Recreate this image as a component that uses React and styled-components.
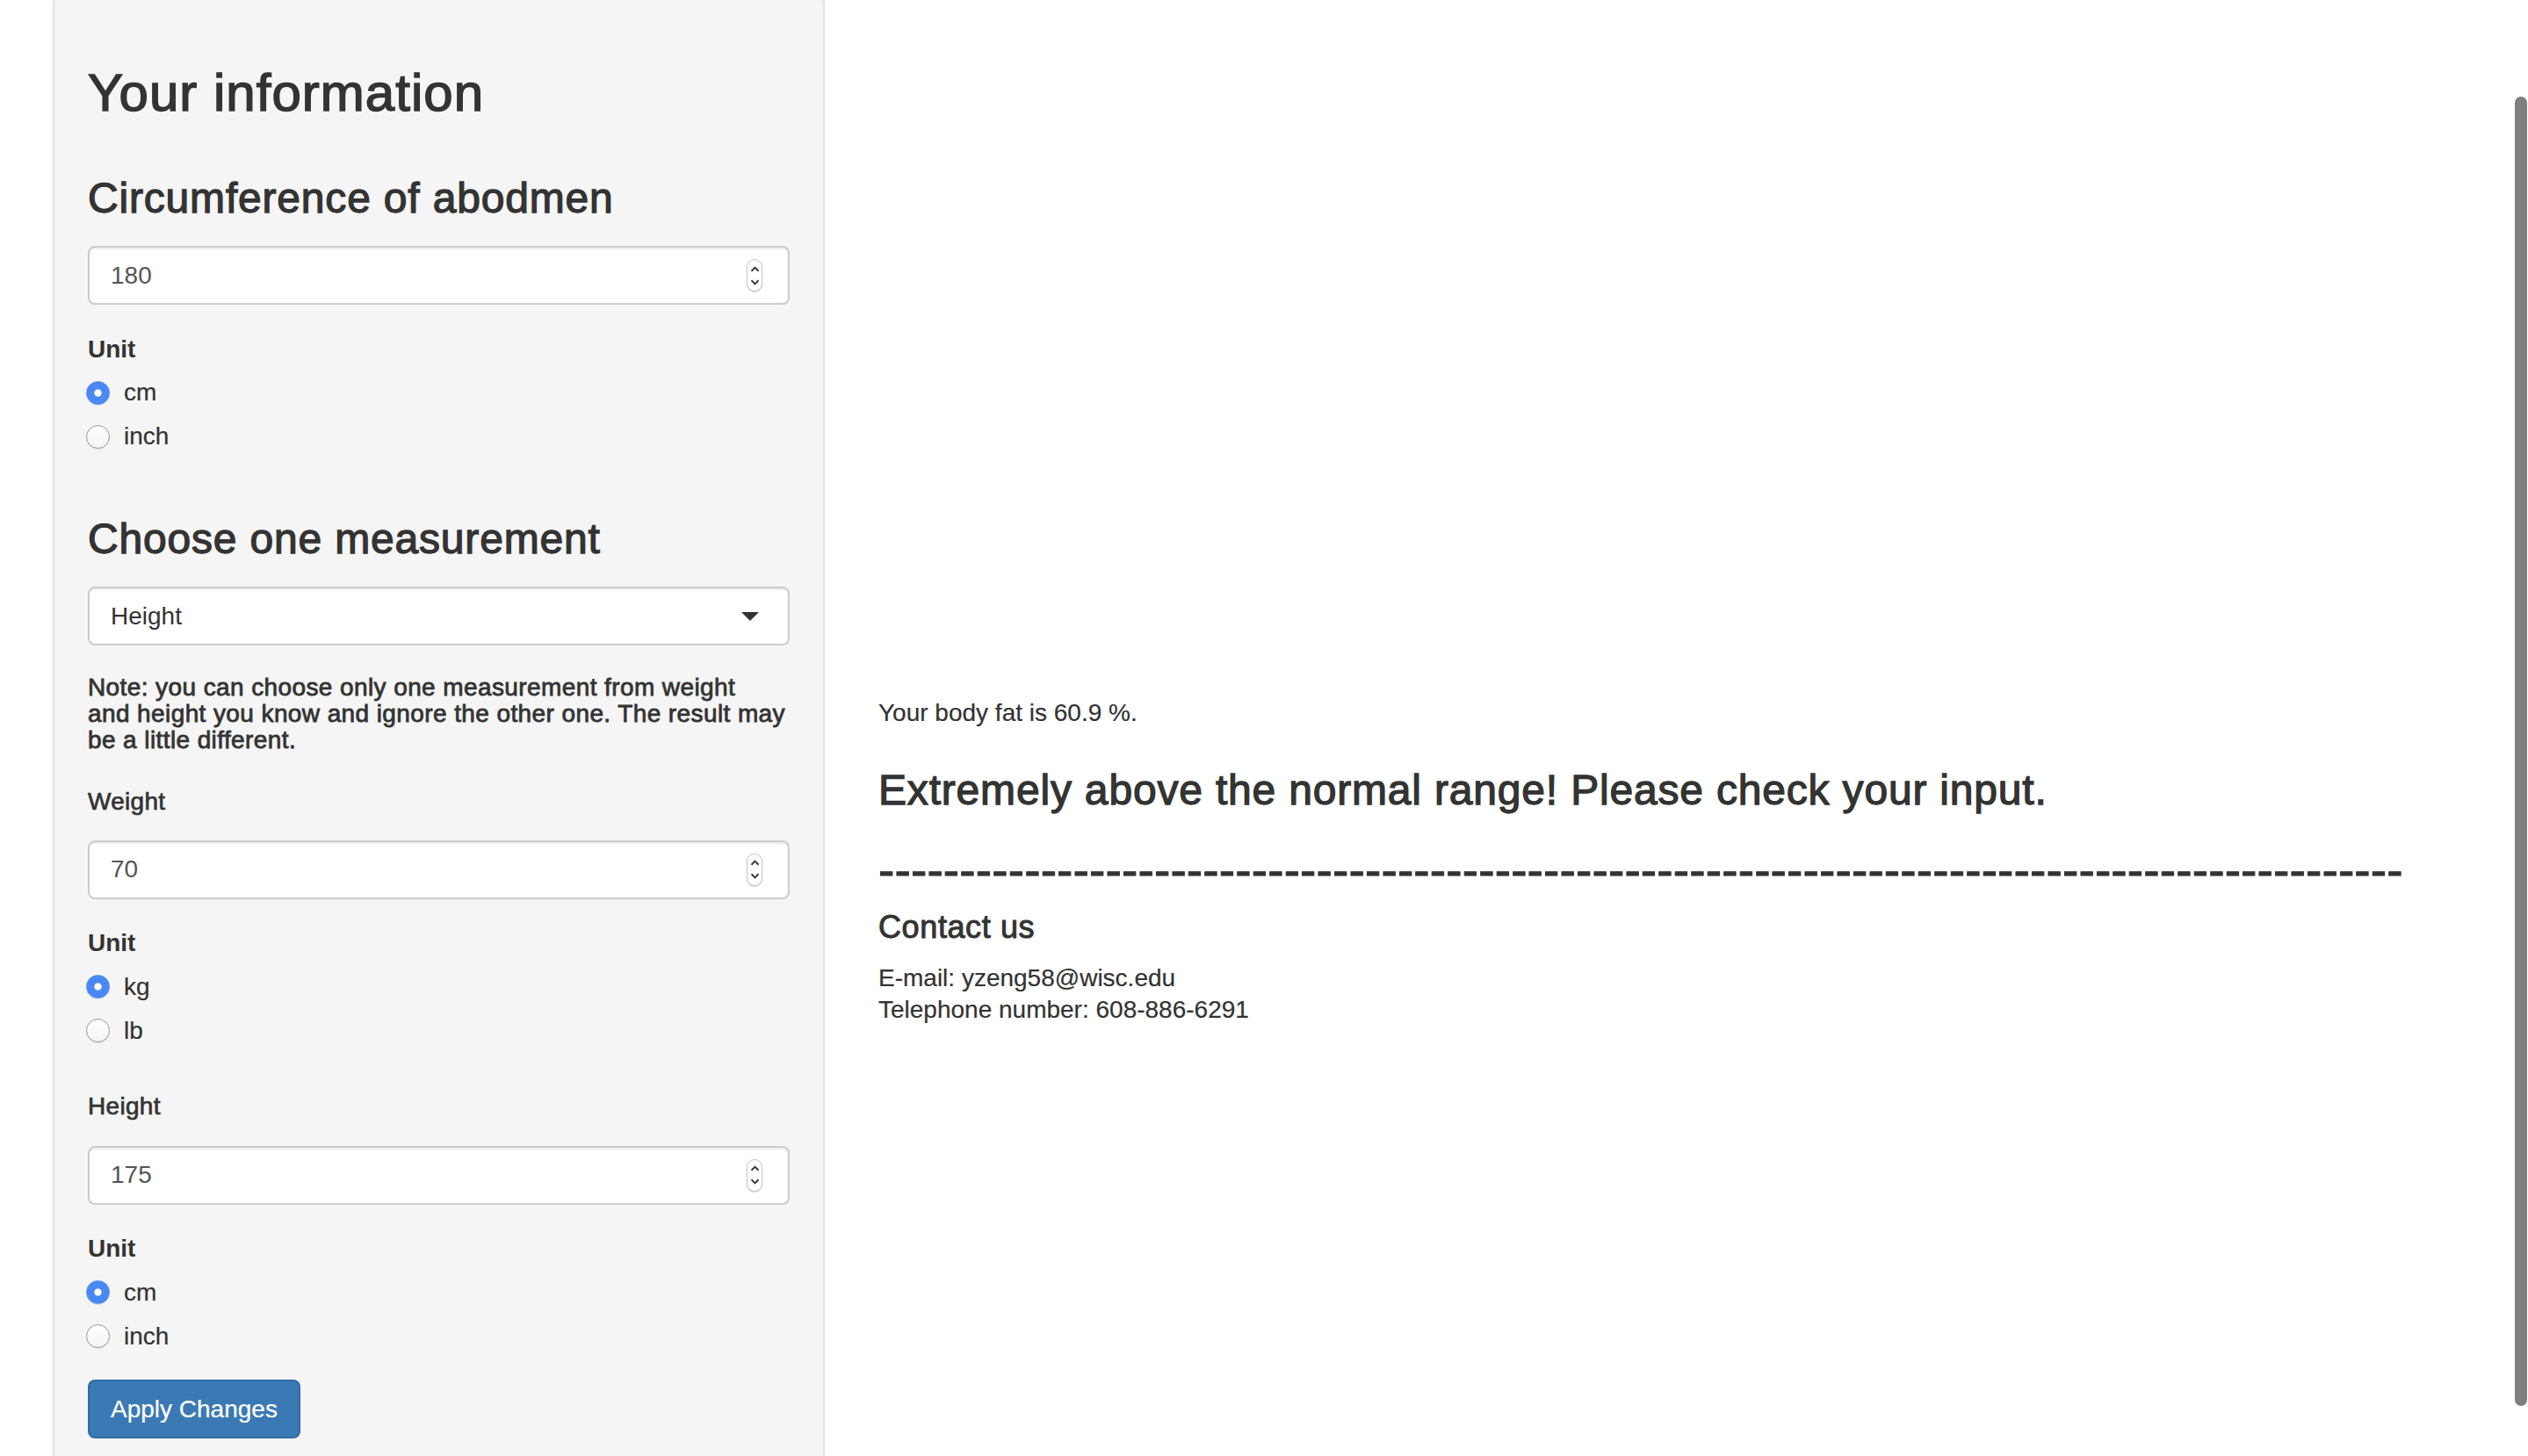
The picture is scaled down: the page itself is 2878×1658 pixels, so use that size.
import React from 'react'
import styled, { createGlobalStyle, css } from 'styled-components'


const GlobalStyle = createGlobalStyle`
    html, body {
        margin: 0;
        padding: 0;
        overflow: hidden;
        background: #fff;
    }
    body {
        font-family: "Liberation Sans", Arial, Helvetica, sans-serif;
        color: #333;
    }
    * {
        box-sizing: border-box;
    }
`;

// Helvetica Neue Medium look on top of Liberation Sans
const medium = css`
    font-weight: 400;
    -webkit-text-stroke: ${p => p.$stroke || '0.7px'} currentColor;
    letter-spacing: 0.017em;
`;

const Page = styled.div`
    display: grid;
    grid-template-columns: 879px 1fr;
    column-gap: 61px;
    align-items: start;
    padding: 0 30px 0 60px;
    min-height: 1658px;
`;

const Well = styled.form`
    display: flex;
    flex-direction: column;
    margin-top: -5px;
    padding: 38px 38px 38px;
    background: #f5f5f5;
    border: 2px solid #e3e3e3;
    border-radius: 8px;
    box-shadow: inset 0 2px 2px rgba(0,0,0,0.05);
`;

const Title = styled.h2`
    ${medium}
    margin: 38px 0 0;
    font-size: 60px;
    line-height: 66px;
`;

const SectionTitle = styled.h3`
    ${medium}
    margin: ${p => p.$gap}px 0 0;
    font-size: 48px;
    line-height: 52.8px;
`;

const FieldBox = styled.div`
    display: flex;
    align-items: center;
    height: 67px;
    margin-top: ${p => p.$gap}px;
    padding: 0 ${p => p.$padRight}px 0 24px;
    background: #fff;
    border: 2px solid #ccc;
    border-radius: 8px;
    box-shadow: inset 0 2px 2px rgba(0,0,0,0.075);
`;

const NumberInput = styled.input`
    flex: 1;
    min-width: 0;
    padding: 0;
    border: 0;
    outline: 0;
    background: transparent;
    font-family: inherit;
    font-size: 28px;
    color: #555;
`;

const Spinner = styled.span`
    display: flex;
    flex-direction: column;
    align-items: center;
    justify-content: center;
    gap: 8px;
    width: 18px;
    height: 37px;
    background: #fff;
    border: 1px solid #c6c6c6;
    border-radius: 9px;
    box-shadow: 0 1px 1px rgba(0,0,0,0.18);
`;

const SelectInput = styled.select`
    flex: 1;
    min-width: 0;
    padding: 0;
    border: 0;
    outline: 0;
    appearance: none;
    background: transparent;
    font-family: inherit;
    font-size: 28px;
    color: #333;
`;

const UnitLabel = styled.div`
    margin-top: 30.3px;
    font-size: 28px;
    font-weight: 700;
    line-height: 40px;
`;

const RadioList = styled.div`
    display: flex;
    flex-direction: column;
    margin-top: 4.7px;
`;

const RadioRow = styled.label`
    display: flex;
    align-items: center;
    gap: 16px;
    height: 50px;
    font-size: 28px;
    line-height: 50px;
    color: #333;
    -webkit-text-stroke: 0.2px currentColor;
`;

const RadioDot = styled.input`
    appearance: none;
    flex: none;
    width: 27px;
    height: 27px;
    margin: 0 0 0 -2px;
    border-radius: 50%;
    border: 1.5px solid #979797;
    background: linear-gradient(#fff, #f4f4f4);
    box-shadow: 0 1px 1px rgba(0,0,0,0.08);

    &:checked {
        border: 1px solid #4a89f3;
        background: radial-gradient(circle, #fff 0 3.6px, #4a89f3 4.6px);
    }
`;

const Note = styled.div`
    ${medium}
    margin-top: 32.3px;
    font-size: 28px;
    line-height: 30px;
    letter-spacing: 0.4px;
    white-space: nowrap;
`;

const FieldLabel = styled.div`
    ${medium}
    margin-top: ${p => p.$gap}px;
    font-size: 28px;
    line-height: 40px;
    letter-spacing: 0.3px;
`;

const ApplyButton = styled.button`
    align-self: flex-start;
    height: 67px;
    margin-top: 24.5px;
    padding: 0 24px;
    background: #3b79b4;
    border: 2px solid #2e6da4;
    border-radius: 8px;
    font-family: inherit;
    font-size: 28px;
    color: #fff;
    -webkit-text-stroke: 0.2px currentColor;
`;

const Main = styled.div`
    display: flex;
    flex-direction: column;
    padding-top: 792.3px;
`;

const BodyFat = styled.p`
    margin: 0;
    font-size: 28px;
    line-height: 40px;
    -webkit-text-stroke: 0.2px currentColor;
`;

const Verdict = styled.h3`
    ${medium}
    margin: 41.7px 0 0;
    font-size: 48px;
    line-height: 52.8px;
`;

const Divider = styled.div`
    margin-top: 34.3px;
    font-size: 55px;
    line-height: 60px;
    letter-spacing: 0.15px;
    white-space: nowrap;
    -webkit-text-stroke: 1px currentColor;
`;

const ContactTitle = styled.h4`
    ${medium}
    margin: 14.6px 0 0;
    font-size: 36px;
    line-height: 39.6px;
`;

const ContactInfo = styled.div`
    margin-top: 21px;
    font-size: 28px;
    line-height: 36px;
    -webkit-text-stroke: 0.2px currentColor;
`;

const ScrollThumb = styled.div`
    position: fixed;
    top: 110px;
    right: 1px;
    width: 14px;
    height: 1491px;
    border-radius: 7px;
    background: #7f7f7f;
`;


const Chevron = ({ up }) => (
    <svg width="11" height="7" viewBox="0 0 11 7">
        <path
            d={up ? 'M1.5 5.8 L5.5 1.6 L9.5 5.8' : 'M1.5 1.2 L5.5 5.4 L9.5 1.2'}
            fill="none"
            stroke="#3a3a3a"
            strokeWidth="2"
        />
    </svg>
);

const NumberField = ({ value, gap }) => (
    <FieldBox $gap={gap} $padRight={29}>
        <NumberInput type="text" inputMode="numeric" defaultValue={value} readOnly />
        <Spinner>
            <Chevron up />
            <Chevron />
        </Spinner>
    </FieldBox>
);

const UnitChoice = ({ name, options, checked }) => (
    <>
        <UnitLabel>Unit</UnitLabel>
        <RadioList>
            {options.map(opt => (
                <RadioRow key={opt}>
                    <RadioDot type="radio" name={name} value={opt} defaultChecked={opt === checked} />
                    {opt}
                </RadioRow>
            ))}
        </RadioList>
    </>
);


export default function App() {
    return (
        <>
            <GlobalStyle />
            <Page>
                <Well onSubmit={e => e.preventDefault()}>
                    <Title $stroke="1.5px">Your information</Title>

                    <SectionTitle $gap={60.8} $stroke="1.3px">Circumference of abodmen</SectionTitle>
                    <NumberField value="180" gap={27.8} />
                    <UnitChoice name="abdomen_unit" options={['cm', 'inch']} checked="cm" />

                    <SectionTitle $gap={66} $stroke="1.3px">Choose one measurement</SectionTitle>
                    <FieldBox $gap={27.2} $padRight={33}>
                        <SelectInput defaultValue="Height">
                            <option>Weight</option>
                            <option>Height</option>
                        </SelectInput>
                        <svg width="20" height="10" viewBox="0 0 20 10">
                            <polygon points="0,0 20,0 10,10" fill="#333" />
                        </svg>
                    </FieldBox>

                    <Note $stroke="0.8px">
                        Note: you can choose only one measurement from weight<br />
                        and height you know and ignore the other one. The result may<br />
                        be a little different.
                    </Note>

                    <FieldLabel $gap={35} $stroke="0.7px">Weight</FieldLabel>
                    <NumberField value="70" gap={24.2} />
                    <UnitChoice name="weight_unit" options={['kg', 'lb']} checked="kg" />

                    <FieldLabel $gap={41} $stroke="0.7px">Height</FieldLabel>
                    <NumberField value="175" gap={24.7} />
                    <UnitChoice name="height_unit" options={['cm', 'inch']} checked="cm" />

                    <ApplyButton type="submit">Apply Changes</ApplyButton>
                </Well>

                <Main>
                    <BodyFat>Your body fat is 60.9 %.</BodyFat>
                    <Verdict $stroke="1.3px">Extremely above the normal range! Please check your input.</Verdict>
                    <Divider>{'-'.repeat(94)}</Divider>
                    <ContactTitle $stroke="1px">Contact us</ContactTitle>
                    <ContactInfo>
                        <div>E-mail: yzeng58@wisc.edu</div>
                        <div>Telephone number: 608-886-6291</div>
                    </ContactInfo>
                </Main>
            </Page>
            <ScrollThumb />
        </>
    )
}
